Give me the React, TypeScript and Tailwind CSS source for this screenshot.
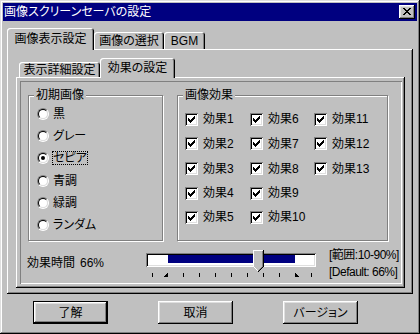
import React from "react";

const raisedWin =
  "shadow-[inset_-1px_-1px_#000,inset_1px_1px_#dfdfdf,inset_-2px_-2px_#808080,inset_2px_2px_#fff]";
const raisedBtn =
  "shadow-[inset_-1px_-1px_#000,inset_1px_1px_#fff,inset_-2px_-2px_#808080,inset_2px_2px_#dfdfdf]";
const panel =
  "shadow-[inset_-1px_-1px_#000,inset_1px_1px_#fff,inset_-2px_-2px_#808080]";
const tabSel =
  "shadow-[inset_1px_1px_#fff,inset_-1px_0_#000,inset_-2px_0_#808080]";
const sunken2 =
  "shadow-[inset_1px_1px_#808080,inset_-1px_-1px_#fff,inset_2px_2px_#000,inset_-2px_-2px_#dfdfdf]";

function CloseGlyph() {
  return (
    <svg width="8" height="7" viewBox="0 0 8 7" shapeRendering="crispEdges">
      <path
        d="M0 0h2v1h-2zM6 0h2v1h-2zM1 1h2v1h-2zM5 1h2v1h-2zM2 2h4v1h-4zM3 3h2v1h-2zM2 4h4v1h-4zM1 5h2v1h-2zM5 5h2v1h-2zM0 6h2v1h-2zM6 6h2v1h-2z"
        fill="#000"
      />
    </svg>
  );
}

function CheckGlyph() {
  return (
    <svg width="7" height="7" viewBox="0 0 7 7" shapeRendering="crispEdges">
      <path
        d="M0 2h1v3h-1zM1 3h1v3h-1zM2 4h1v3h-1zM3 3h1v3h-1zM4 2h1v3h-1zM5 1h1v3h-1zM6 0h1v3h-1z"
        fill="#000"
      />
    </svg>
  );
}

function Thumb() {
  const rects: React.ReactNode[] = [];
  // fill body
  rects.push(<rect key="f" x={0} y={0} width={11} height={17} fill="#c0c0c0" />);
  for (let k = 1; k <= 5; k++) {
    rects.push(
      <rect key={"fk" + k} x={k} y={16 + k} width={11 - 2 * k} height={1} fill="#c0c0c0" />
    );
  }
  // white left & top
  rects.push(<rect key="wl" x={0} y={0} width={1} height={17} fill="#fff" />);
  rects.push(<rect key="wt" x={0} y={0} width={10} height={1} fill="#fff" />);
  for (let k = 1; k <= 4; k++) {
    rects.push(<rect key={"wd" + k} x={k} y={16 + k} width={1} height={1} fill="#fff" />);
  }
  // black right
  rects.push(<rect key="br" x={10} y={0} width={1} height={17} fill="#000" />);
  for (let k = 1; k <= 5; k++) {
    rects.push(<rect key={"bd" + k} x={10 - k} y={16 + k} width={1} height={1} fill="#000" />);
  }
  // gray inner right
  rects.push(<rect key="gr" x={9} y={1} width={1} height={16} fill="#808080" />);
  for (let k = 1; k <= 4; k++) {
    rects.push(<rect key={"gd" + k} x={9 - k} y={16 + k} width={1} height={1} fill="#808080" />);
  }
  return (
    <svg width="11" height="22" viewBox="0 0 11 22" shapeRendering="crispEdges">
      {rects}
    </svg>
  );
}

function Ticks() {
  const xs = [6, 37, 53, 69, 85, 101, 117, 133, 165];
  return (
    <svg width="170" height="5" viewBox="0 0 170 5" shapeRendering="crispEdges">
      {xs.map((x) => (
        <rect key={x} x={x} y={0} width={1} height={4} fill="#000" />
      ))}
      <path d="M18 4h4v-4h-1v1h-1v1h-1v1h-1z" fill="#000" />
      <path d="M149 0h1v1h1v1h1v1h1v1h-4z" fill="#000" />
    </svg>
  );
}

function Radio({ label, checked, focus }: { label: string; checked?: boolean; focus?: boolean }) {
  return (
    <div className="flex items-center h-full">
      <span className="w-[12px] h-[12px] rounded-full border border-t-[#808080] border-l-[#808080] border-b-white border-r-white flex items-center justify-center">
        <span className="w-[10px] h-[10px] rounded-full border border-t-black border-l-black border-b-[#dfdfdf] border-r-[#dfdfdf] bg-white flex items-center justify-center">
          {checked && <span className="w-[4px] h-[4px] rounded-full bg-black" />}
        </span>
      </span>
      <span
        className={
          "ml-[3px] leading-[12px] border " +
          (focus ? "border-dotted border-black" : "border-transparent")
        }
      >
        {label}
      </span>
    </div>
  );
}

function CheckBox({ label }: { label: string }) {
  return (
    <div className="flex items-center h-full">
      <span className={"w-[13px] h-[13px] bg-white flex items-center justify-center " + sunken2}>
        <CheckGlyph />
      </span>
      <span className="ml-[5px] leading-[14px]">{label}</span>
    </div>
  );
}

function Button({ label, def }: { label: string; def?: boolean }) {
  return (
    <div
      className={
        "w-[75px] h-[23px] flex items-center justify-center " +
        (def ? "border border-black " : "") +
        raisedBtn
      }
    >
      <span className="leading-[14px]">{label}</span>
    </div>
  );
}

export default function App() {
  return (
    <div className="w-[420px] h-[334px] bg-[#c0c0c0] text-black text-[12px] font-['Liberation_Sans','Noto_Sans_CJK_JP',sans-serif] [font-feature-settings:'palt'] overflow-hidden">
      <div className={"w-[420px] h-[334px] p-[3px] flex flex-col " + raisedWin}>
        {/* Title bar */}
        <div className="h-[18px] bg-[#000080] flex items-center justify-between pl-[1px] pr-[2px]">
          <span className="text-white leading-[14px]">画像スクリーンセーバの設定</span>
          <div className={"w-[16px] h-[14px] bg-[#c0c0c0] pl-[4px] pt-[3px] " + raisedBtn}>
            <CloseGlyph />
          </div>
        </div>

        <div className="mx-[4px] mt-[7px] flex flex-col">
          {/* Main tabs */}
          <div className="h-[21px] flex items-start">
            <div
              className={
                "relative z-10 w-[87px] h-[22px] bg-[#c0c0c0] rounded-t-[3px] flex items-center justify-center " +
                tabSel
              }
            >
              <span className="leading-[14px]">画像表示設定</span>
            </div>
            <div
              className={
                "mt-[4px] w-[70px] h-[17px] rounded-t-[3px] flex items-center justify-center " + tabSel
              }
            >
              <span className="leading-[14px]">画像の選択</span>
            </div>
            <div
              className={
                "mt-[4px] w-[41px] h-[17px] rounded-t-[3px] flex items-center justify-center " + tabSel
              }
            >
              <span className="leading-[14px]">BGM</span>
            </div>
          </div>

          {/* Main panel */}
          <div className={"h-[245px] pt-[9px] pl-[9px] pr-[8px] pb-[6px] flex flex-col " + panel}>
            {/* Sub tabs */}
            <div className="h-[19px] flex items-start">
              <div
                className={
                  "ml-[3px] mt-[4px] w-[81px] h-[15px] rounded-t-[3px] flex items-center justify-center " +
                  tabSel
                }
              >
                <span className="leading-[14px]">表示詳細設定</span>
              </div>
              <div
                className={
                  "relative z-10 w-[75px] h-[20px] bg-[#c0c0c0] rounded-t-[3px] flex items-center justify-center " +
                  tabSel
                }
              >
                <span className="leading-[14px]">効果の設定</span>
              </div>
            </div>

            {/* Sub panel */}
            <div className={"h-[211px] pt-[4px] pl-[4px] pr-[3px] pb-[4px] " + panel}>
              <div className="h-[203px] pt-[14px] pl-[8px] shadow-[inset_1px_1px_#808080,inset_-1px_-1px_#fff]">
                <div className="flex">
                  {/* 初期画像 */}
                  <div className="relative w-[135px] h-[146px] border border-[#808080] shadow-[inset_1px_1px_#fff,1px_1px_#fff] pl-[8px] pt-[6px]">
                    <span className="absolute left-[5px] top-[-9px] px-[2px] bg-[#c0c0c0] leading-[16px]">
                      初期画像
                    </span>
                    <div className="grid grid-rows-[23px_22px_22px_23px_22px_22px]">
                      <Radio label="黒" />
                      <Radio label="グレー" />
                      <Radio label="セピア" checked focus />
                      <Radio label="青調" />
                      <Radio label="緑調" />
                      <Radio label="ランダム" />
                    </div>
                  </div>

                  {/* 画像効果 */}
                  <div className="relative ml-[14px] w-[211px] h-[146px] border border-[#808080] shadow-[inset_1px_1px_#fff,1px_1px_#fff] pl-[7px] pt-[11px]">
                    <span className="absolute left-[5px] top-[-9px] px-[2px] bg-[#c0c0c0] leading-[16px]">
                      画像効果
                    </span>
                    <div className="flex">
                      <div className="w-[65px] grid grid-rows-[24px_25px_25px_24px_24px]">
                        <CheckBox label="効果1" />
                        <CheckBox label="効果2" />
                        <CheckBox label="効果3" />
                        <CheckBox label="効果4" />
                        <CheckBox label="効果5" />
                      </div>
                      <div className="w-[64px] grid grid-rows-[24px_25px_25px_24px_24px]">
                        <CheckBox label="効果6" />
                        <CheckBox label="効果7" />
                        <CheckBox label="効果8" />
                        <CheckBox label="効果9" />
                        <CheckBox label="効果10" />
                      </div>
                      <div className="grid grid-rows-[24px_25px_25px_24px_24px]">
                        <CheckBox label="効果11" />
                        <CheckBox label="効果12" />
                        <CheckBox label="効果13" />
                      </div>
                    </div>
                  </div>
                </div>

                {/* Slider row */}
                <div className="mt-[5px] -ml-px flex items-start">
                  <div className="w-[119px] mt-[10px] leading-[14px] flex">
                    <span>効果時間</span>
                    <span className="ml-[5px]">66%</span>
                  </div>
                  <div className="w-[170px] flex flex-col">
                    <div className={"relative mt-[7px] h-[14px] bg-white " + sunken2}>
                      <div className="absolute left-[22px] top-[2px] w-[127px] h-[8px] bg-[#000080]" />
                      <div className="absolute left-[107px] top-[-3px] w-[11px] h-[22px]">
                        <Thumb />
                      </div>
                    </div>
                    <div className="mt-[6px] h-[5px]">
                      <Ticks />
                    </div>
                  </div>
                  <div className="ml-[13px] pt-[1px] leading-[17px] tracking-[-0.5px]">
                    <div>[範囲:10-90%]</div>
                    <div>[Default: 66%]</div>
                  </div>
                </div>
              </div>
            </div>
          </div>
        </div>

        {/* Buttons */}
        <div className="mt-[7px] ml-[30px] flex gap-[50px]">
          <Button label="了解" def />
          <Button label="取消" />
          <Button label="バージョン" />
        </div>
      </div>
    </div>
  );
}
